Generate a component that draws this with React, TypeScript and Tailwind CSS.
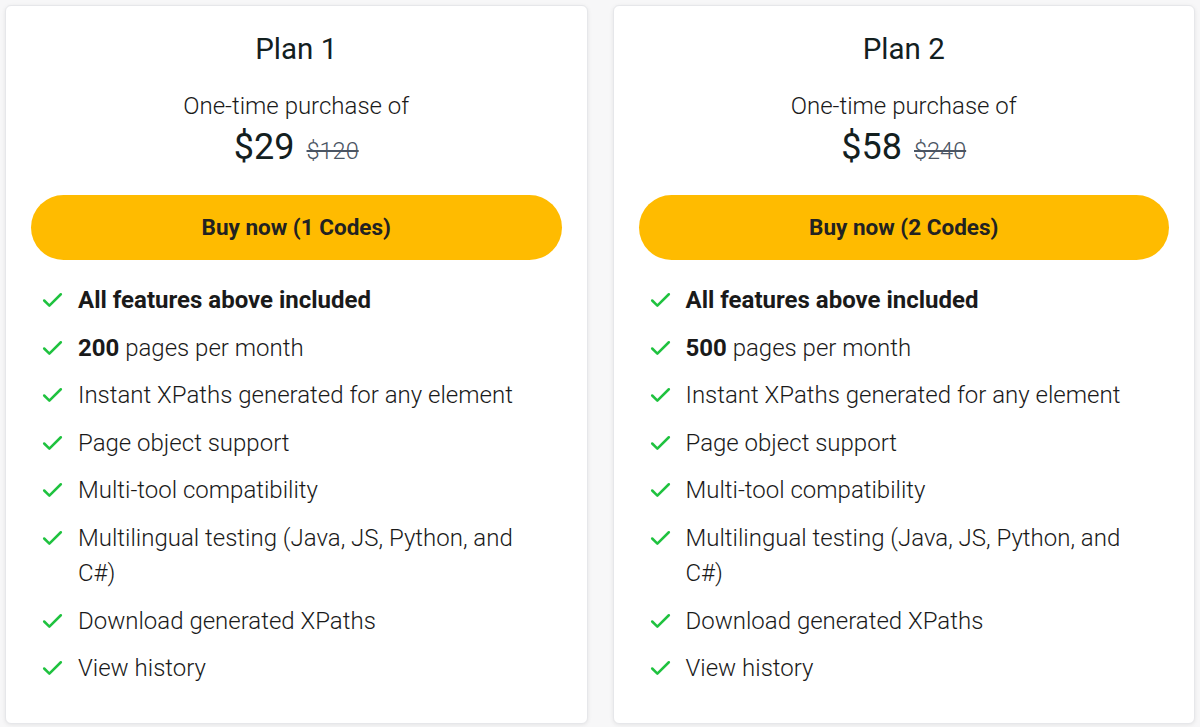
import { Check } from 'lucide-react';

const plans = [
	{ name: 'Plan 1', price: '$29', was: '$120', codes: '1 Codes', pages: '200' },
	{ name: 'Plan 2', price: '$58', was: '$240', codes: '2 Codes', pages: '500' },
];

const features = [
	'Instant XPaths generated for any element',
	'Page object support',
	'Multi-tool compatibility',
	'Multilingual testing (Java, JS, Python, and C#)',
	'Download generated XPaths',
	'View history',
];

function Item({ children }: { children: React.ReactNode }) {
	return (
		<li className="flex items-start">
			<Check className="w-[25px] h-[25px] mt-[5px] ml-[-3px] mr-[13px] shrink-0 text-[#1fc23f]" strokeWidth={2.4} />
			<span className="flex-1">{children}</span>
		</li>
	);
}

export default function App() {
	return (
		<div className="w-[1200px] h-[727px] bg-[#f7f7f8] p-[5px] font-['Roboto',sans-serif]">
			<div className="grid grid-cols-2 gap-[25px]">
				{plans.map((plan) => (
					<div key={plan.name} className="bg-white rounded-[6px] border border-[#e6e7ea] shadow-[0_1px_4px_rgba(0,0,0,0.08)] pt-[27px] pb-[36px] px-[25px]">
						<h2 className="text-center text-[29.5px] leading-[32px] font-normal text-[#13201f]">{plan.name}</h2>
						<p className="mt-[27px] text-center text-[24px] leading-[28px] font-light text-[#1a1a1a]">One-time purchase of</p>
						<div className="mt-[7px] flex items-baseline justify-center gap-[12px]">
							<span className="text-[36px] leading-[40px] font-normal text-[#13201f]">{plan.price}</span>
							<span className="text-[23.5px] leading-[28px] font-light text-[#4b5563] line-through">{plan.was}</span>
						</div>
						<button className="mt-[28px] w-full h-[65px] rounded-full bg-[#ffbb00] text-[22.5px] font-bold text-[#222]">
							Buy now ({plan.codes})
						</button>
						<ul className="mt-[23px] pl-[12px] pr-[30px] flex flex-col gap-[12px] text-[24px] leading-[35.5px] font-light text-[#1a1a1a]">
							<Item><b className="font-bold">All features above included</b></Item>
							<Item><b className="font-bold">{plan.pages}</b> pages per month</Item>
							{features.map((f) => (
								<Item key={f}>{f}</Item>
							))}
						</ul>
					</div>
				))}
			</div>
		</div>
	);
}
